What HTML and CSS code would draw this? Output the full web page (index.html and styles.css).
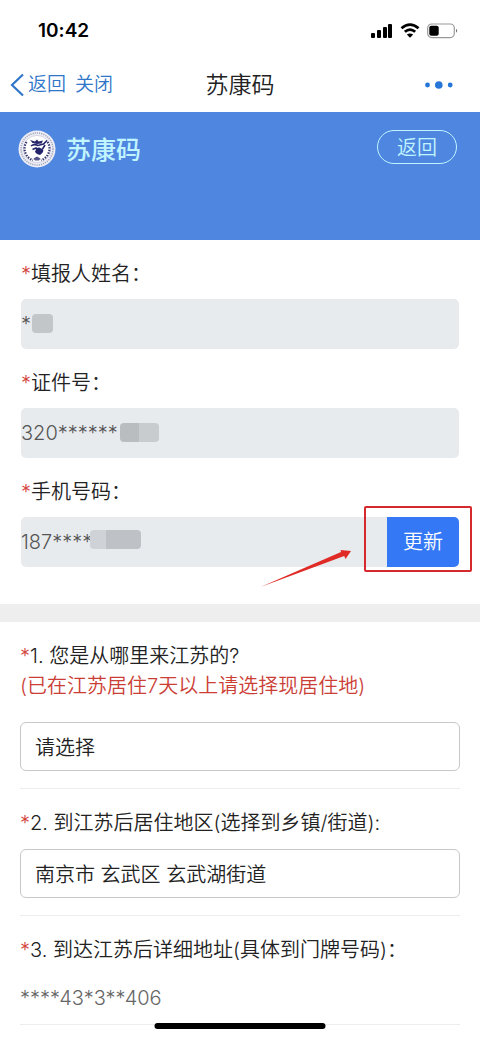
FILE: index.html
```html
<!DOCTYPE html>
<html lang="zh-CN">
<head>
<meta charset="UTF-8">
<meta name="viewport" content="width=device-width, initial-scale=1.0">
<title>苏康码</title>
<link rel="stylesheet" href="styles.css">
</head>
<body>
<div class="status-bar">
    <span class="time">10:42</span>
    <div class="status-icons">
        <svg width="22" height="16" viewBox="0 0 22 16">
            <rect x="0" y="10" width="4" height="5" rx="1"/>
            <rect x="6" y="7" width="4" height="8" rx="1"/>
            <rect x="12" y="4" width="4" height="11" rx="1"/>
            <rect x="17" y="1" width="4" height="14" rx="1"/>
        </svg>
        <svg width="20" height="16" viewBox="0 0 20 16">
            <path d="M1.5 5.2Q10-2 18.5 5.2M4.8 8.8Q10 4.4 15.2 8.8" fill="none" stroke="#000" stroke-width="2.8"/>
            <path d="M10 14.8L6.8 11.5Q10 9.4 13.2 11.5Z"/>
        </svg>
        <svg width="31" height="16" viewBox="0 0 31 16">
            <rect x="0.7" y="1" width="26.6" height="13.6" rx="4" fill="none" stroke="#999" stroke-width="1.2"/>
            <rect x="2.3" y="2.8" width="9.4" height="10" rx="2"/>
            <path d="M29 5.8Q31.5 7.8 29 9.8Z" fill="#777"/>
        </svg>
    </div>
</div>

<nav class="nav-bar">
    <div class="nav-left">
        <a href="#" class="nav-back">
            <svg width="14" height="24" viewBox="0 0 14 24"><path d="M13 1.5L2 12L13 22.5" fill="none" stroke="#2f76c9" stroke-width="2.2"/></svg>
            返回
        </a>
        <a href="#">关闭</a>
    </div>
    <h1 class="nav-title">苏康码</h1>
    <button class="more" aria-label="更多">
        <svg width="28" height="8" viewBox="0 0 28 8">
            <circle cx="2.5" cy="4" r="2.4"/>
            <circle cx="13.8" cy="4" r="3.8"/>
            <circle cx="25.2" cy="4" r="2.4"/>
        </svg>
    </button>
</nav>

<header class="banner">
    <div class="brand">
        <svg width="38" height="38" viewBox="0 0 38 38">
            <circle cx="19" cy="19" r="18.5" fill="#eeeef7"/>
            <circle cx="19" cy="19" r="16" fill="none" stroke="#a9a8bd" stroke-width="1.6" stroke-dasharray="1.2 1"/>
            <circle cx="19" cy="19" r="13.6" fill="#fff" stroke="#bcbcd0" stroke-width="0.6"/>
            <path d="M8.5 12A12.2 12.2 0 0 0 15 30.2M29.5 12A12.2 12.2 0 0 1 23 30.2" fill="none" stroke="#34346f" stroke-width="2.2" stroke-dasharray="1.4 1.3"/>
            <path d="M12 10L17 11.5L19 9.5L20.5 11.5L25 10.5L23.5 13.5L19 14L14.5 13Z" fill="#24246b"/>
            <path d="M13 16Q16 13.5 20 15.5L25.5 14L29 10.5M14.5 19.5L18 18L20 20M27 15L24.5 19" fill="none" stroke="#24246b" stroke-width="1.6"/>
            <path d="M18 19Q21 16.5 23 18.5Q26 18.5 25 22Q23.5 24 22 25Q18.5 24.5 17 22Z" fill="#24246b"/>
            <path d="M15.5 28.5L19 26.5L22.5 28.5L21 30.5H17Z" fill="#55558a"/>
        </svg>
        <span>苏康码</span>
    </div>
    <button class="pill">返回</button>
</header>

<form>
    <section class="info">
        <div class="field">
            <label for="name"><i>*</i>填报人姓名：</label>
            <div class="readonly">
                <input type="text" id="name" value="*" readonly>
                <span class="mask mask-name"></span>
            </div>
        </div>
        <div class="field">
            <label for="idcard"><i>*</i>证件号：</label>
            <div class="readonly">
                <input type="text" id="idcard" value="320******" readonly>
                <span class="mask mask-id"></span>
            </div>
        </div>
        <div class="field">
            <label for="phone"><i>*</i>手机号码：</label>
            <div class="readonly">
                <input type="text" id="phone" value="187****" readonly>
                <span class="mask mask-phone"></span>
                <button type="button" class="update">更新</button>
                <span class="highlight"></span>
                <svg class="arrow" width="92" height="38" viewBox="0 0 92 38">
                    <path d="M0.5 37L81 2L80.5 0L91 1L85.5 9L84.2 6Z" fill="#e02a26"/>
                </svg>
            </div>
        </div>
    </section>

    <section class="questions">
        <div class="question">
            <label for="from"><i>*</i>1. 您是从哪里来江苏的?</label>
            <p class="note">(已在江苏居住7天以上请选择现居住地)</p>
            <select id="from"><option>请选择</option></select>
        </div>
        <div class="question">
            <label for="area"><i>*</i>2. 到江苏后居住地区(选择到乡镇/街道):</label>
            <select id="area"><option>南京市 玄武区 玄武湖街道</option></select>
        </div>
        <div class="question">
            <label for="address"><i>*</i>3. 到达江苏后详细地址(具体到门牌号码)：</label>
            <input type="text" id="address" value="****43*3**406">
        </div>
    </section>
</form>
<div class="home-indicator"></div>
</body>
</html>
```
FILE: styles.css
```css
* {
    box-sizing: border-box;
}

body {
    margin: 0;
    background-color: #fff;
    color: #222;
    font-family: Inter, "Noto Sans CJK SC", sans-serif;
    font-size: 20px;
    font-weight: 350;
    font-variant-ligatures: no-contextual;
    line-height: 30px;
}

input,
select,
button {
    margin: 0;
    padding: 0;
    border: none;
    border-radius: 0;
    font: inherit;
    font-variant-ligatures: inherit;
    color: inherit;
    background: none;
}

a {
    color: #2f76c9;
    text-decoration: none;
}

.status-bar {
    display: flex;
    justify-content: space-between;
    align-items: center;
    height: 60px;
    padding: 2px 22px 0 38px;
}

.time {
    font-size: 19px;
    font-weight: 600;
    color: #000;
}

.status-icons {
    display: flex;
    gap: 7px;
}

.nav-bar {
    display: grid;
    grid-template-columns: 1fr auto 1fr;
    align-items: center;
    height: 52px;
    padding-bottom: 2px;
}

.nav-left {
    display: flex;
    gap: 9px;
    padding-left: 10px;
    font-size: 19px;
}

.nav-back {
    display: flex;
    align-items: center;
    gap: 4px;
}

.nav-title {
    margin: 0;
    font-size: 23px;
    font-weight: 350;
}

.more {
    display: flex;
    justify-self: end;
    margin-right: 27px;
    fill: #2676d8;
}

.banner {
    display: flex;
    justify-content: space-between;
    align-items: flex-start;
    height: 128px;
    padding: 18px 23px 0 18px;
    background-color: #4f87e0;
    color: #c0f5ff;
}

.brand {
    display: flex;
    align-items: center;
    gap: 10px;
    font-size: 25px;
    font-weight: 500;
}

.brand span {
    padding-top: 2px;
}

.pill {
    width: 80px;
    height: 34px;
    padding-top: 2px;
    border: 1px solid #c0f5ff;
    border-radius: 17px;
}

.info {
    padding: 20px 21px 37px;
    border-bottom: 18px solid #eee;
}

.field + .field {
    margin-top: 20px;
}

label {
    display: block;
}

label i {
    color: #d3453c;
    font-style: normal;
}

.field label {
    margin-bottom: 10px;
    line-height: 29px;
}

.readonly {
    position: relative;
    display: flex;
    height: 50px;
    border-radius: 5px;
    background-color: #e8ebee;
    color: #555;
}

.readonly input {
    flex: 1;
    min-width: 0;
}

/* covers the private part of each value */
.mask {
    position: absolute;
    top: 15px;
    height: 19px;
    border-radius: 4px;
    background: linear-gradient(90deg, #b9bdc0 50%, #c9cccf 50%);
}

.mask-name {
    left: 11px;
    width: 21px;
    background: #c3c6c9;
}

.mask-id {
    left: 99px;
    width: 39px;
}

.mask-phone {
    top: 13px;
    left: 69px;
    width: 51px;
    background: linear-gradient(90deg, #cfd3d8 32%, #bec1c5 32%);
}

.update {
    width: 72px;
    border-radius: 0 5px 5px 0;
    background-color: #3478f6;
    color: #fff;
}

.highlight {
    position: absolute;
    top: -11px;
    right: -13px;
    width: 108px;
    height: 66px;
    border: 2px solid #d6292e;
    border-radius: 2px;
    pointer-events: none;
}

.arrow {
    position: absolute;
    top: 33px;
    right: 107px;
}

.questions {
    padding: 0 20px;
}

.question {
    padding: 19px 0 17px;
    border-bottom: 1px solid #eee;
}

.question label {
    margin-bottom: 11px;
}

.note {
    margin: -11px 0 21px;
    color: #cb3e36;
}

select {
    display: block;
    width: 100%;
    height: 49px;
    padding: 2px 14px 0;
    border: 1px solid #c8c8c8;
    border-radius: 6px;
    appearance: none;
}

.question input {
    display: block;
    width: 100%;
    height: 42px;
    padding-top: 2px;
    color: #666;
}

.question:last-child {
    padding-bottom: 6px;
}

.home-indicator {
    position: fixed;
    bottom: 10px;
    left: 50%;
    width: 171px;
    height: 6px;
    border-radius: 3px;
    background-color: #000;
    transform: translateX(-50%);
}
```
